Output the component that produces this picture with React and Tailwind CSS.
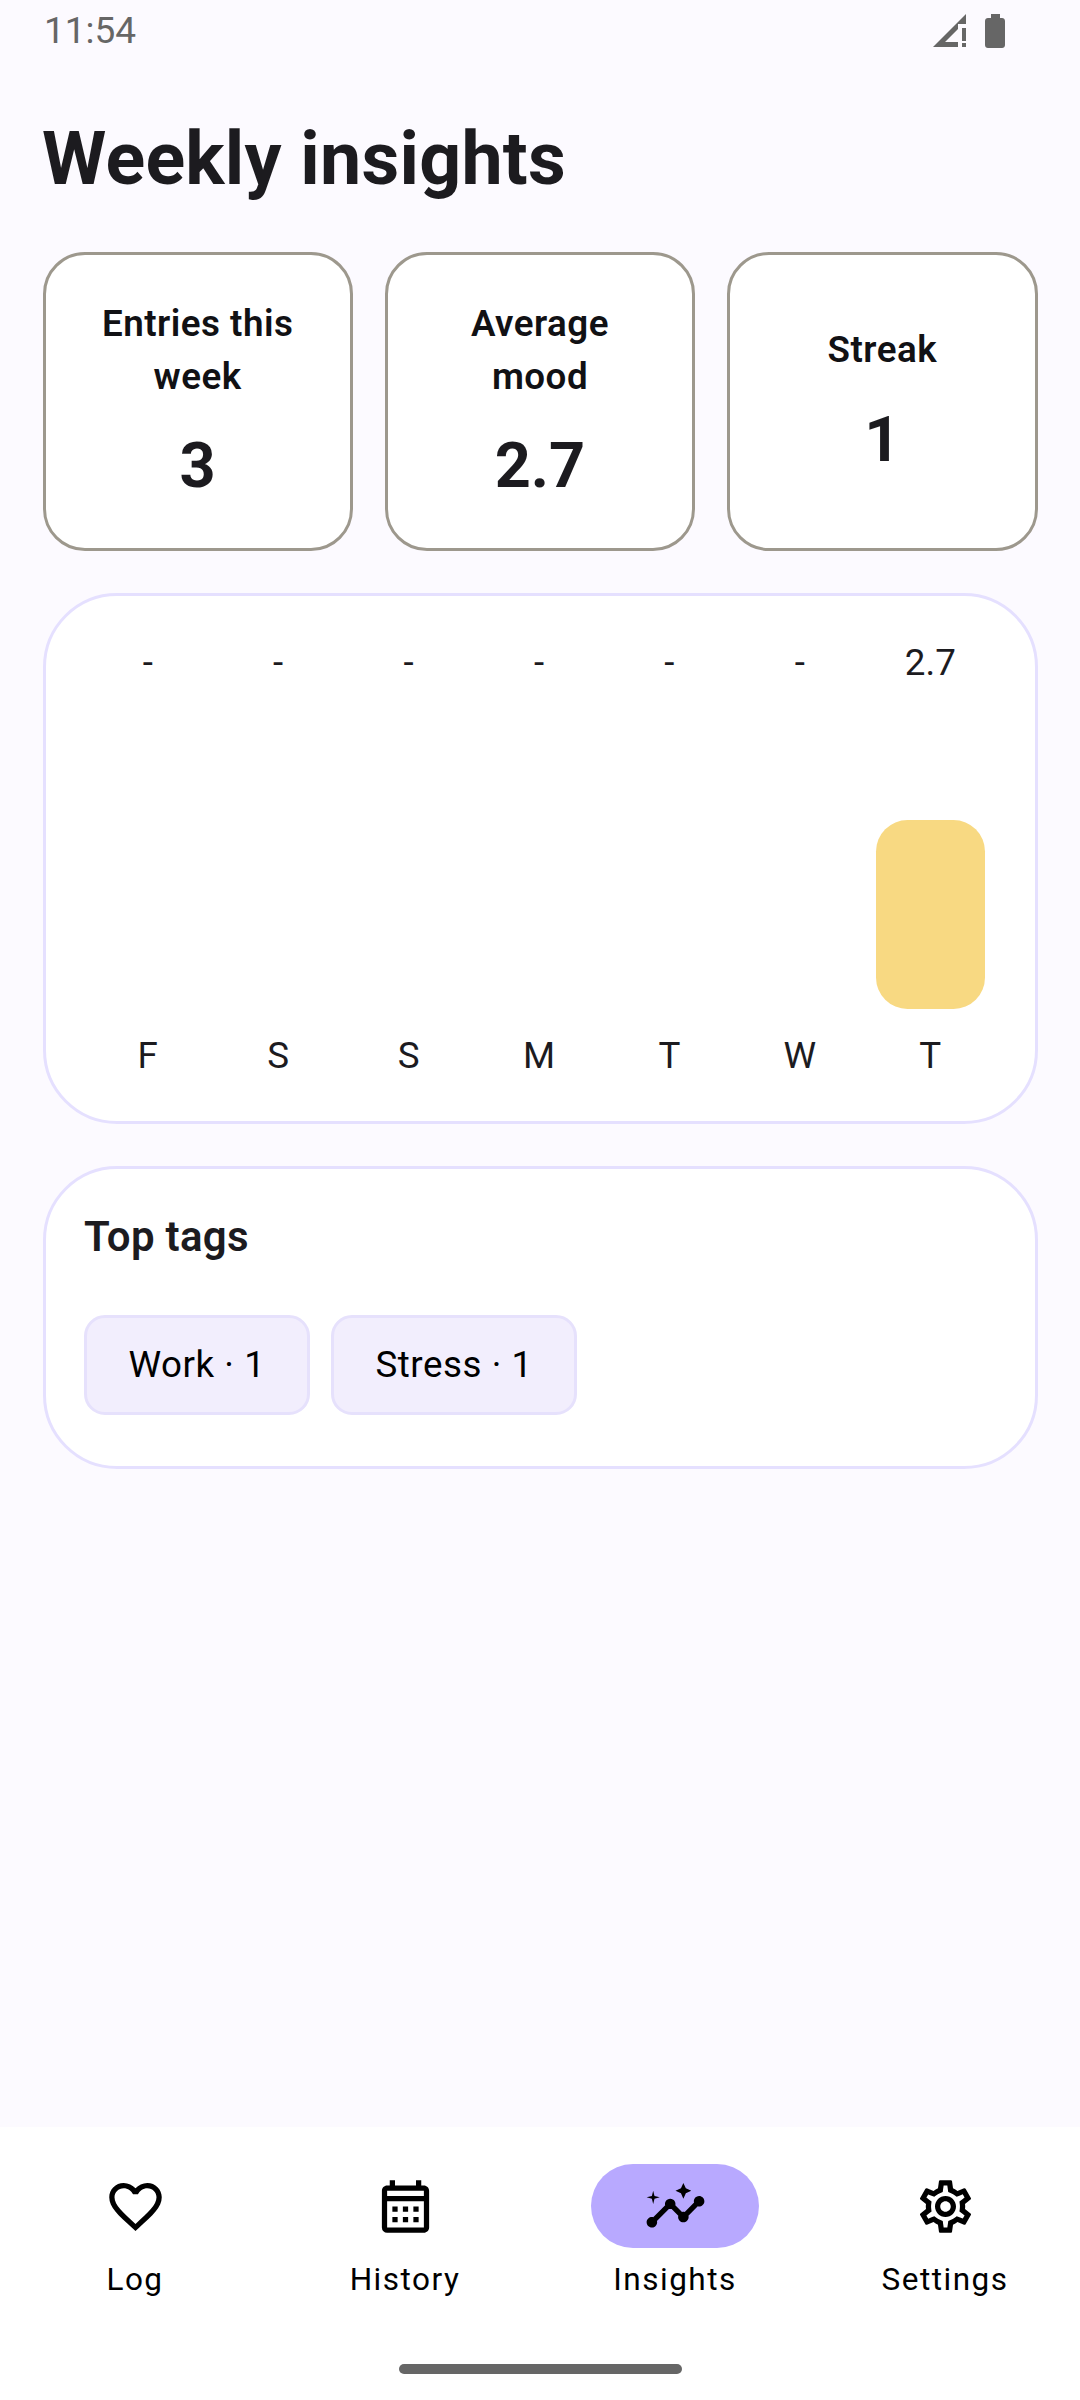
import { MdFavoriteBorder, MdInsights, MdOutlineCalendarMonth, MdOutlineSettings } from "react-icons/md";

const stats = [
  { label: "Entries this week", value: "3" },
  { label: "Average mood", value: "2.7" },
  { label: "Streak", value: "1" },
];

const days = [
  { day: "F", value: "-" },
  { day: "S", value: "-" },
  { day: "S", value: "-" },
  { day: "M", value: "-" },
  { day: "T", value: "-" },
  { day: "W", value: "-" },
  { day: "T", value: "2.7", height: 189 },
];

const tabs = [
  { label: "Log", Icon: MdFavoriteBorder },
  { label: "History", Icon: MdOutlineCalendarMonth },
  { label: "Insights", Icon: MdInsights, active: true },
  { label: "Settings", Icon: MdOutlineSettings },
];

function StatusBar() {
  return (
    <div className="flex h-[60px] items-start justify-between pl-[44px] pr-[75px] text-[#666666]">
      <span className="text-[37px] leading-[62px]">11:54</span>
      <div className="mt-[14px] flex items-start gap-[19px]">
        <svg width="33" height="33" viewBox="0 0 33 33" fill="currentColor">
          <path d="M33 0V10H25V15L12 28H25V33H0Z" />
          <rect x="29" y="14" width="4" height="13" />
          <rect x="29" y="29" width="4" height="4" />
        </svg>
        <svg width="20" height="34" viewBox="0 0 20 34" fill="currentColor">
          <path d="M6 0H15V4H17C18.7 4 20 5.3 20 7V31C20 32.7 18.7 34 17 34H3C1.3 34 0 32.7 0 31V7C0 5.3 1.3 4 3 4H6Z" />
        </svg>
      </div>
    </div>
  );
}

function StatCard({ label, value }) {
  return (
    <div className="flex flex-col items-center justify-center gap-[21px] rounded-[42px] border-[3px] border-[#9d988d] bg-white px-[42px] pt-[43.5px] pb-[40px] text-center">
      <div className="text-[36.75px] leading-[52.5px] font-semibold tracking-[0.5px] text-[#111114]">{label}</div>
      <div className="text-[63px] leading-[84px] font-bold text-[#1c1b1f]">{value}</div>
    </div>
  );
}

function MoodChart() {
  return (
    <div className="mt-[42px] grid grid-cols-7 gap-x-[21px] rounded-[74px] border-[3px] border-[#e5e0ff] bg-white pt-[41.4px] pr-[49.5px] pb-[38.4px] pl-[47.5px]">
      {days.map((d, i) => (
        <div key={i} className="flex flex-col items-center text-[36.75px] leading-[52.5px] text-[#1c1b1f]">
          <span>{d.value}</span>
          <div className="my-[21px] flex h-[298px] w-full items-end">
            {d.height && <div className="h-[189px] w-full rounded-[31.5px] bg-[#f8d982]" />}
          </div>
          <span>{d.day}</span>
        </div>
      ))}
    </div>
  );
}

function TopTags() {
  return (
    <div className="mt-[42px] h-[303px] rounded-[74px] border-[3px] border-[#e5e0ff] bg-white px-[38.4px] pt-[36.4px]">
      <h2 className="text-[42px] leading-[63px] font-semibold tracking-[0.3px] text-[#1c1b1f]">Top tags</h2>
      <div className="mt-[46.5px] flex gap-[21px]">
        {["Work · 1", "Stress · 1"].map((tag) => (
          <span
            key={tag}
            className="flex h-[100px] items-center rounded-[21px] border-[3px] border-[#e6e1fc] bg-[#f2eefd] px-[41.5px] text-[36.75px] tracking-[0.55px] text-[#000000]"
          >
            {tag}
          </span>
        ))}
      </div>
    </div>
  );
}

function BottomNav() {
  return (
    <nav className="flex h-[273px] flex-col bg-white pt-[37px]">
      <div className="grid grid-cols-4">
        {tabs.map(({ label, Icon, active }) => (
          <div key={label} className="flex flex-col items-center">
            <div className={`flex h-[84px] w-[168px] items-center justify-center rounded-full ${active ? "bg-[#b8a9ff]" : ""}`}>
              <Icon size={63} color="#000000" />
            </div>
            <span className="mt-[10.5px] text-[31.5px] leading-[42px] tracking-[1.5px] text-[#000000]">{label}</span>
          </div>
        ))}
      </div>
      <div className="mx-auto mt-[63px] h-[10px] w-[283px] rounded-full bg-[#666666]" />
    </nav>
  );
}

export default function App() {
  return (
    <div className="flex h-[2400px] w-[1080px] flex-col bg-[#fcfaff] font-['Roboto',sans-serif]">
      <StatusBar />
      <main className="flex-1 pt-[51.5px] pr-[42.5px] pl-[42.5px]">
        <h1 className="-ml-[0.5px] text-[73.5px] leading-[94.5px] font-bold tracking-[0.25px] text-[#1c1b1f]">Weekly insights</h1>
        <div className="mt-[45.5px] grid grid-cols-3 gap-x-[32px]">
          {stats.map((s) => (
            <StatCard key={s.label} {...s} />
          ))}
        </div>
        <MoodChart />
        <TopTags />
      </main>
      <BottomNav />
    </div>
  );
}
